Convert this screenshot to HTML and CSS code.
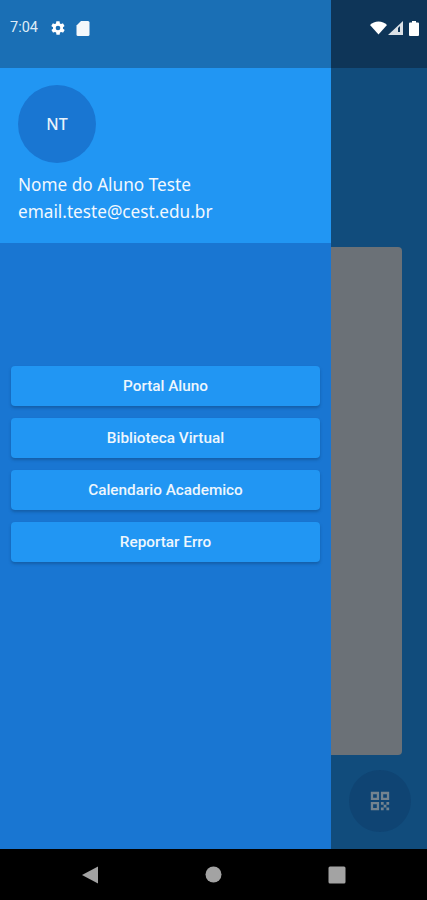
FILE: index.html
```html
<!DOCTYPE html>
<html>
<head>
    <meta charset="utf-8">
    <title>Menu</title>
    <link rel="stylesheet" href="styles.css">
</head>
<body>
    <div class="screen">
        <div class="drawer">
            <div class="statusbar">
                <span class="clock">7:04</span>
                <svg class="gear" width="16" height="16" viewBox="0 0 24 24"><path fill-rule="evenodd" d="M19.4 13c.1-.3.1-.7.1-1s0-.7-.1-1l2.1-1.6c.2-.2.2-.4.1-.6l-2-3.5c-.1-.2-.4-.3-.6-.2l-2.5 1c-.5-.4-1.100-.7-1.700-1l-.4-2.700c0-.2-.2-.4-.5-.4h-4c-.2 0-.4.2-.5.4l-.4 2.700c-.6.300-1.200.600-1.700 1l-2.500-1c-.2-.1-.5 0-.6.2l-2 3.500c-.1.200-.1.400.1.600L4.600 11c-.1.300-.1.700-.1 1s0 .7.1 1l-2.100 1.600c-.2.200-.2.400-.1.600l2 3.500c.1.200.4.300.6.200l2.500-1c.5.400 1.100.7 1.700 1l.4 2.700c0 .2.2.4.5.4h4c.2 0 .4-.2.5-.4l.4-2.700c.6-.3 1.200-.6 1.700-1l2.500 1c.2.100.5 0 .6-.2l2-3.500c.1-.2.100-.4-.1-.6zM12 15.500a3.500 3.500 0 1 1 0-7 3.500 3.500 0 0 1 0 7z"/></svg>
                <svg class="sdcard" width="14" height="16" viewBox="0 0 14 16"><path d="M5 1h7a1.500 1.500 0 0 1 1.500 1.500v12A1.500 1.500 0 0 1 12 16H2a1.500 1.500 0 0 1-1.500-1.500V5.500z"/></svg>
            </div>
            <div class="profile">
                <div class="avatar">NT</div>
                <div class="name">Nome do Aluno Teste</div>
                <div class="email">email.teste@cest.edu.br</div>
            </div>
            <div class="menu">
                <a class="menu-btn">Portal Aluno</a>
                <a class="menu-btn">Biblioteca Virtual</a>
                <a class="menu-btn">Calendario Academico</a>
                <a class="menu-btn">Reportar Erro</a>
            </div>
        </div>
        <div class="behind">
            <div class="statusbar statusbar-dark">
                <svg width="17" height="14" viewBox="0 0 17 13"><path fill="#fff" d="M0 3.500C2.200 1.300 5.200 0 8.500 0S14.800 1.300 17 3.500L8.500 13z"/></svg>
                <svg width="15" height="14" viewBox="0 0 15 14"><path fill="#fff" fill-opacity=".85" d="M15 0v14H0z"/><path fill="#0e3558" d="M12 5v6h-2V7z"/></svg>
                <svg class="battery" width="10" height="15" viewBox="0 0 10 15"><path fill="#fff" d="M3 0h4v1.500h2a1 1 0 0 1 1 1V14a1 1 0 0 1-1 1H1a1 1 0 0 1-1-1V2.500a1 1 0 0 1 1-1h2z"/></svg>
            </div>
            <div class="behind-content">
                <div class="card"></div>
            </div>
            <div class="fab">
                <svg width="22" height="22" viewBox="0 0 24 24"><path fill="#74838f" fill-rule="evenodd" d="M2 2h9v9H2zm2.500 2.500v4h4v-4zM13 2h9v9h-9zm2.500 2.500v4h4v-4zM2 13h9v9H2zm2.500 2.500v4h4v-4z"/><path fill="#74838f" d="M13 13h3v3h-3zM19 13h3v3h-3zM16 16h3v3h-3zM13 19h3v3h-3zM19 19h3v3h-3z"/></svg>
            </div>
        </div>
    </div>
    <div class="navbar">
        <svg width="18" height="18" viewBox="0 0 18 18"><path fill="#a3a3a3" d="M17 0.500v17L1 9z"/></svg>
        <svg width="17" height="17" viewBox="0 0 17 17"><circle fill="#a3a3a3" cx="8.500" cy="8.500" r="8"/></svg>
        <svg width="18" height="18" viewBox="0 0 18 18"><rect fill="#a3a3a3" x="0.500" y="0.500" width="17" height="17" rx="1.500"/></svg>
    </div>
</body>
</html>
```

FILE: styles.css
```css
body
{
    margin: 0;
    width: 427px;
    height: 900px;
    overflow: hidden;
    font-family: "Noto Sans", sans-serif;
    color: #fff;
    background: #000;
}

.screen
{
    display: flex;
    height: 849px;
}

.drawer
{
    width: 331px;
    display: flex;
    flex-direction: column;
    background: #1976d2;
}

.statusbar
{
    height: 68px;
    box-sizing: border-box;
    display: flex;
    align-items: center;
    padding: 0 0 13px 10px;
    background: #1a6fb5;
}

.clock
{
    font: 14.5px Roboto, sans-serif;
    color: #dfecf7;
    width: 40px;
}

.gear
{
    fill: #fff;
}

.sdcard
{
    fill: #f4f8fb;
    margin-left: 10px;
}

.profile
{
    height: 175px;
    box-sizing: border-box;
    padding: 17px 18px 0;
    background: #2196f3;
}

.avatar
{
    width: 78px;
    height: 78px;
    border-radius: 50%;
    background: #1976d2;
    display: flex;
    align-items: center;
    justify-content: center;
    font-size: 16px;
    font-weight: 500;
    color: #e8f2fb;
    margin-bottom: 8px;
}

.name, .email
{
    font-size: 17.2px;
    line-height: 27px;
    color: #f2f8fe;
}

.menu
{
    display: flex;
    flex-direction: column;
    gap: 12px;
    padding: 123px 11px 0;
}

.menu-btn
{
    height: 40px;
    display: flex;
    align-items: center;
    justify-content: center;
    background: #2196f3;
    border-radius: 4px;
    box-shadow: 0 2px 3px rgba(13, 60, 110, 0.4);
    font: 500 15.3px Roboto, sans-serif;
    color: #eef6fd;
}

.behind
{
    flex: 1;
    position: relative;
    background: #114c7c;
}

.statusbar-dark
{
    background: #0e3558;
    justify-content: flex-end;
    gap: 1px;
    padding: 0 8px 12px 0;
}

.battery
{
    margin-left: 5px;
}

.behind-content
{
    padding: 179px 25px 0 0;
}

.card
{
    height: 508px;
    background: #6b7177;
    border-radius: 0 4px 4px 0;
}

.fab
{
    position: absolute;
    left: 18px;
    top: 770px;
    width: 62px;
    height: 62px;
    border-radius: 50%;
    background: #0f4473;
    display: flex;
    align-items: center;
    justify-content: center;
}

.navbar
{
    height: 51px;
    display: flex;
    align-items: center;
    justify-content: space-between;
    padding: 0 81px;
    background: #000;
}
```
